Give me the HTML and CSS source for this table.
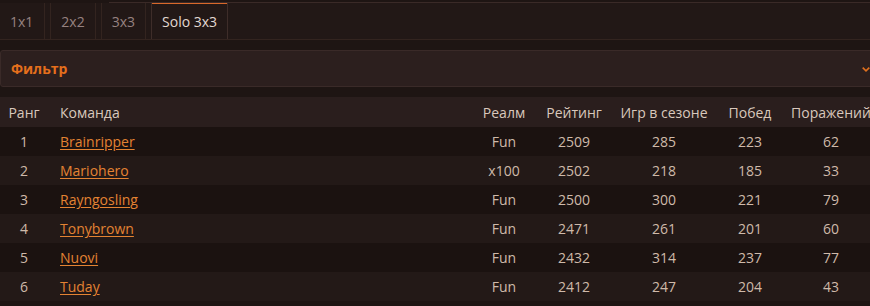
FILE: index.html
```html
<!DOCTYPE html>
<html lang="ru">
<head>
<meta charset="utf-8">
<title>Solo 3x3</title>
<link rel="stylesheet" href="styles.css">
</head>
<body>
<div class="page">
  <div class="topline"></div>
  <nav class="tabs">
    <a class="tab tab-first">1x1</a>
    <a class="tab">2x2</a>
    <a class="tab">3x3</a>
    <a class="tab tab-active">Solo 3x3</a>
  </nav>
  <div class="filter">
    <span class="filter-title">Фильтр</span>
    <svg class="chevron" width="8" height="5" viewBox="0 0 8 5"><path d="M0.7 0.7 L4 3.8 L7.3 0.7" fill="none" stroke="#e0701e" stroke-width="1.6"/></svg>
  </div>
  <table class="ladder">
    <colgroup>
      <col class="c-rank"><col class="c-team"><col class="c-realm"><col class="c-rating"><col class="c-games"><col class="c-wins"><col class="c-losses">
    </colgroup>
    <thead>
      <tr><th>Ранг</th><th class="left">Команда</th><th>Реалм</th><th>Рейтинг</th><th>Игр в сезоне</th><th>Побед</th><th>Поражений</th></tr>
    </thead>
    <tbody>
      <tr><td>1</td><td class="left"><a href="#">Brainripper</a></td><td>Fun</td><td>2509</td><td>285</td><td>223</td><td>62</td></tr>
      <tr><td>2</td><td class="left"><a href="#">Mariohero</a></td><td>x100</td><td>2502</td><td>218</td><td>185</td><td>33</td></tr>
      <tr><td>3</td><td class="left"><a href="#">Rayngosling</a></td><td>Fun</td><td>2500</td><td>300</td><td>221</td><td>79</td></tr>
      <tr><td>4</td><td class="left"><a href="#">Tonybrown</a></td><td>Fun</td><td>2471</td><td>261</td><td>201</td><td>60</td></tr>
      <tr><td>5</td><td class="left"><a href="#">Nuovi</a></td><td>Fun</td><td>2432</td><td>314</td><td>237</td><td>77</td></tr>
      <tr><td>6</td><td class="left"><a href="#">Tuday</a></td><td>Fun</td><td>2412</td><td>247</td><td>204</td><td>43</td></tr>
    </tbody>
  </table>
</div>
</body>
</html>
```

FILE: styles.css
```css
html, body {
  margin: 0;
  padding: 0;
  background: #1e1513;
  overflow: hidden;
}
.page {
  width: 880px;
  font-family: "Open Sans", "Noto Sans", sans-serif;
  font-size: 14px;
  color: #d3bfb0;
}
.topline {
  height: 3px;
  margin-left: 109px;
  background: #1e1513;
  box-shadow: inset 0 -1px 0 #3a2a27;
}
.tabs {
  display: flex;
  gap: 5px;
  height: 36px;
  background: #221816;
  border-bottom: 1px solid #33241f;
}
.tab {
  display: flex;
  align-items: center;
  padding: 0 10px;
  border-left: 1px solid #33241f;
  border-right: 1px solid #33241f;
  color: #968280;
  cursor: pointer;
}
.tab-first {
  margin-left: -1px;
  padding-left: 10px;
  padding-right: 11px;
}
.tab-active {
  color: #e2d8d2;
  border-left-color: #3e2d29;
  border-right-color: #3e2d29;
  box-shadow: inset 0 1px 0 #d8682a;
}
.filter {
  margin-top: 10px;
  height: 35px;
  display: flex;
  align-items: center;
  justify-content: space-between;
  padding: 0 9px 0 10px;
  background: #2c1f1e;
  border: 1px solid #3a2a28;
  border-radius: 3px;
}
.filter-title {
  color: #e56f1c;
  font-weight: 700;
}
.chevron {
  display: block;
  margin-top: 1px;
}
.ladder {
  margin-top: 10px;
  width: 880px;
  table-layout: fixed;
  border-collapse: collapse;
}
.c-rank { width: 48px; }
.c-team { width: 422px; }
.c-realm { width: 68px; }
.c-rating { width: 72px; }
.c-games { width: 108px; }
.c-wins { width: 64px; }
.c-losses { width: 98px; }
.ladder th {
  height: 30px;
  padding: 0;
  font-weight: 400;
  text-align: center;
  color: #d9c8bc;
  background: #2a1e1d;
  white-space: nowrap;
}
.ladder td {
  height: 29px;
  padding: 0;
  text-align: center;
  color: #cfbaaa;
  white-space: nowrap;
}
.ladder .left {
  text-align: left;
  padding-left: 12px;
}
.ladder tbody tr:nth-child(odd) td { background: #1b1210; }
.ladder tbody tr:nth-child(even) td { background: #231917; }
.ladder a {
  color: #e38333;
  text-decoration: underline;
  text-underline-offset: 2px;
}
```
